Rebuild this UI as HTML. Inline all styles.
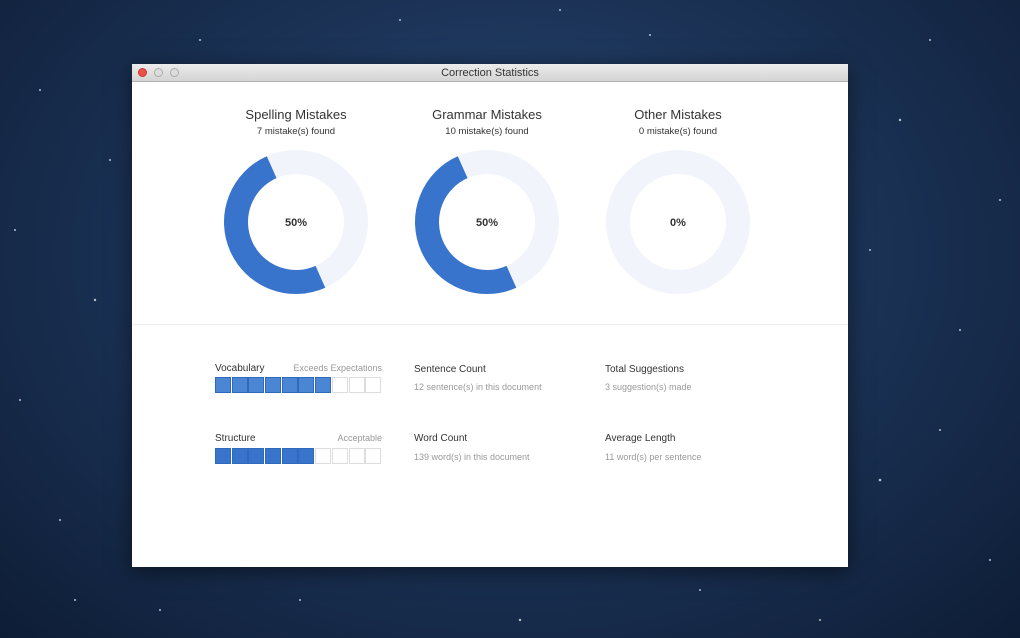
<!DOCTYPE html><html><head><style>
body{margin:0;width:1020px;height:638px;overflow:hidden;background:radial-gradient(ellipse at 50% 40%,#2d4d78 0%,#1c3458 45%,#0e1d36 100%);font-family:"Liberation Sans",sans-serif;position:relative}
.win{position:absolute;left:132px;top:64px;width:716px;height:503px;background:#fff;box-shadow:0 4px 20px rgba(0,0,0,.5)}
.tb{height:17px;background:linear-gradient(#ececec,#d4d4d4);border-bottom:1px solid #b0b0b0;text-align:center;font-size:11px;line-height:19px;color:#333;position:relative}
.dot{position:absolute;top:4px;width:9px;height:9px;border-radius:50%;background:#ddd;border:1px solid #aaa;box-sizing:border-box}
.t{position:absolute;text-align:center;width:200px;color:#333}
.h{font-size:13px}.s{font-size:9.5px}
.lbl{position:absolute;font-size:10px;color:#333}
.sub{position:absolute;font-size:9px;color:#999}
.bar{position:absolute;left:83px;display:flex;gap:0.7px}
.bar i{width:16px;height:16px;border:1px solid #ddd;box-sizing:border-box;display:block}
.bar i.f{background:#3874cb;border-color:#3068bb}
.bar.b i.f{background:#4a86d4}
</style></head><body>
<svg width="1020" height="638" style="position:absolute;left:0;top:0">
<g fill="#fff" opacity=".7">
<circle cx="40" cy="90" r="1"/><circle cx="95" cy="300" r="1.2"/><circle cx="60" cy="520" r="1"/><circle cx="20" cy="400" r="1"/><circle cx="110" cy="160" r="1"/><circle cx="900" cy="120" r="1.2"/><circle cx="960" cy="330" r="1"/><circle cx="880" cy="480" r="1.3"/><circle cx="990" cy="560" r="1"/><circle cx="930" cy="40" r="1"/><circle cx="300" cy="600" r="1"/><circle cx="520" cy="620" r="1.2"/><circle cx="700" cy="590" r="1"/><circle cx="400" cy="20" r="1"/><circle cx="650" cy="35" r="1"/><circle cx="200" cy="40" r="1"/><circle cx="870" cy="250" r="1"/><circle cx="75" cy="600" r="1"/><circle cx="15" cy="230" r="1"/><circle cx="1000" cy="200" r="1"/><circle cx="940" cy="430" r="1"/><circle cx="160" cy="610" r="1"/><circle cx="820" cy="620" r="1"/><circle cx="560" cy="10" r="1"/></g></svg>
<div class="win">
<div class="tb">Correction Statistics
<span class="dot" style="left:6px;background:#e9524b;border-color:#c33"></span><span class="dot" style="left:22px"></span><span class="dot" style="left:38px"></span></div>
<div class="t h" style="left:64px;top:43px">Spelling Mistakes</div><div class="t s" style="left:64px;top:62px">7 mistake(s) found</div>
<div class="t h" style="left:255px;top:43px">Grammar Mistakes</div><div class="t s" style="left:255px;top:62px">10 mistake(s) found</div>
<div class="t h" style="left:446px;top:43px">Other Mistakes</div><div class="t s" style="left:446px;top:62px">0 mistake(s) found</div>
<svg width="716" height="250" style="position:absolute;left:0;top:0">
<g fill="none" stroke-width="24">
<circle cx="164" cy="158" r="60" stroke="#f1f4fa"/><circle cx="164" cy="158" r="60" stroke="#3874cb" stroke-dasharray="188.5 400" transform="rotate(66 164 158)"/>
<circle cx="355" cy="158" r="60" stroke="#f1f4fa"/><circle cx="355" cy="158" r="60" stroke="#3874cb" stroke-dasharray="188.5 400" transform="rotate(66 355 158)"/>
<circle cx="546" cy="158" r="60" stroke="#f1f4fa"/></g>
<g font-size="11" font-weight="bold" fill="#333" text-anchor="middle" font-family="Liberation Sans">
<text x="164" y="162">50%</text><text x="355" y="162">50%</text><text x="546" y="162">0%</text></g></svg>
<div style="position:absolute;left:0;right:0;top:260px;border-top:1px solid #eee"></div>
<div class="lbl" style="left:83px;top:299px">Vocabulary</div><div class="sub" style="left:155px;width:95px;text-align:right;top:299px">Exceeds Expectations</div>
<div class="bar b" style="top:313px"><i class="f"></i><i class="f"></i><i class="f"></i><i class="f"></i><i class="f"></i><i class="f"></i><i class="f"></i><i></i><i></i><i></i></div>
<div class="lbl" style="left:83px;top:369px">Structure</div><div class="sub" style="left:155px;width:95px;text-align:right;top:369px">Acceptable</div>
<div class="bar" style="top:384px"><i class="f"></i><i class="f"></i><i class="f"></i><i class="f"></i><i class="f"></i><i class="f"></i><i></i><i></i><i></i><i></i></div>
<div class="lbl" style="left:282px;top:300px">Sentence Count</div><div class="sub" style="left:282px;top:318px">12 sentence(s) in this document</div>
<div class="lbl" style="left:282px;top:369px">Word Count</div><div class="sub" style="left:282px;top:388px">139 word(s) in this document</div>
<div class="lbl" style="left:473px;top:300px">Total Suggestions</div><div class="sub" style="left:473px;top:318px">3 suggestion(s) made</div>
<div class="lbl" style="left:473px;top:369px">Average Length</div><div class="sub" style="left:473px;top:388px">11 word(s) per sentence</div>
</div></body></html>
